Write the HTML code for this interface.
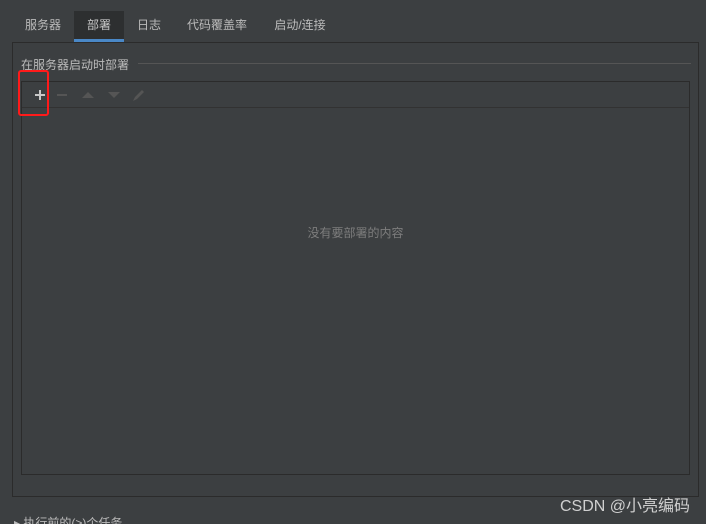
<!DOCTYPE html>
<html style="width:706px;height:524px;overflow:hidden"><head><meta charset="utf-8"><style>
*{margin:0;padding:0;box-sizing:border-box}
body{width:706px;height:524px;background:#3c3f41;font-family:"Liberation Sans","Noto Sans CJK SC",sans-serif;font-size:12px;color:#bbbbbb;position:relative;overflow:hidden}
.tab{position:absolute;top:11px;height:31px;line-height:29px;text-align:center;color:#bbbbbb;font-size:12px}
.tab.act{background:#2d2f30;color:#c8c8c8}
.tab.act:after{content:"";position:absolute;left:0;right:0;bottom:0;height:3px;background:#4a88c7}
.panel{position:absolute;left:12px;top:42px;width:687px;height:455px;border:1px solid #2b2b2b}
.title{position:absolute;left:21px;top:56px;font-size:12px;color:#bbbbbb}
.line{position:absolute;left:138px;top:63px;width:553px;height:1px;background:#555}
.list{position:absolute;left:21px;top:81px;width:669px;height:394px;border:1px solid #2b2b2b}
.tb{position:absolute;left:0;top:0;right:0;height:26px;border-bottom:1px solid #323232}
.empty{position:absolute;left:0;right:0;top:142px;text-align:center;color:#7d7d7d;font-size:12px}
.red{position:absolute;left:18px;top:70px;width:31px;height:46px;border:2px solid #ff1a1a;border-radius:3px}
.wm{position:absolute;right:16px;top:494px;color:#d0d0d0;font-size:16px}
</style></head><body>
<div class="tab" style="left:14px;width:58px">服务器</div>
<div class="tab act" style="left:74px;width:50px">部署</div>
<div class="tab" style="left:126px;width:46px">日志</div>
<div class="tab" style="left:176px;width:82px">代码覆盖率</div>
<div class="tab" style="left:262px;width:76px">启动/连接</div>
<div class="panel"></div>
<div class="title">在服务器启动时部署</div>
<div class="line"></div>
<div class="list">
 <div class="tb">
  <svg width="140" height="26" style="position:absolute;left:0;top:0">
   <path d="M13 13h10M18 8v10" stroke="#c8c8c8" stroke-width="2"/>
   <path d="M35 13h10" stroke="#555" stroke-width="2"/>
   <path d="M60 16l6-6 6 6z" fill="#555"/>
   <path d="M86 10h12l-6 6z" fill="#555"/>
   <path d="M111 19l2-4 7-7 2 2-7 7z" fill="#555"/>
  </svg>
 </div>
 <div class="empty">没有要部署的内容</div>
</div>
<div class="red"></div>
<div class="wm" style="top:492px">CSDN @小亮编码</div>
<div style="position:absolute;left:14px;top:516px;color:#bbb;font-size:12px;line-height:14px">▸ 执行前的(&gt;)个任务</div>
</body></html>
